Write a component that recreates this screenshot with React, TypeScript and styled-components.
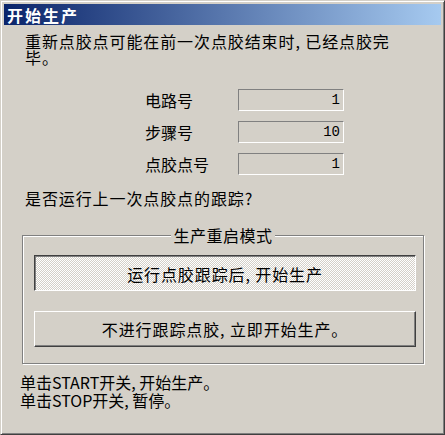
import React from "react";
import styled, { createGlobalStyle } from "styled-components";

const Global = createGlobalStyle`
  html, body { margin: 0; padding: 0; background: #d4d0c8; }
  body { font-family: "Noto Sans CJK SC", "Noto Sans", sans-serif; }
`;

const FONT = `"Noto Sans CJK SC", "Noto Sans", sans-serif`;

const Window = styled.div`
  box-sizing: border-box;
  width: 445px;
  height: 435px;
  background: #d4d0c8;
  border: 1px solid;
  border-color: #d4d0c8 #404040 #404040 #d4d0c8;
  box-shadow: inset 1px 1px 0 #ffffff, inset -1px -1px 0 #808080;
  padding: 3px;
  display: flex;
  flex-direction: column;
  font-family: ${FONT};
  color: #000;
`;

const TitleBar = styled.div`
  height: 21px;
  display: flex;
  align-items: center;
  padding-left: 3px;
  background: linear-gradient(to right, #0a246a, #a6caf0);
  color: #fff;
  font-weight: bold;
  font-size: 16px;
  letter-spacing: 2px;
`;

const Body = styled.div`
  display: flex;
  flex-direction: column;
  padding-left: 16px;
  font-size: 16px;
  letter-spacing: 0.9px;
`;

const Message = styled.div`
  margin: 8px 0 0 5px;
  line-height: 16px;
`;

const FieldGrid = styled.div`
  margin: 24px 0 0 125px;
  display: grid;
  grid-template-columns: 93px 106px;
  row-gap: 10px;
  align-items: center;
  letter-spacing: 0;
`;

const Label = styled.div`
  line-height: 16px;
`;

const ValueBox = styled.div`
  box-sizing: border-box;
  height: 22px;
  border: 1px solid;
  border-color: #808080 #ffffff #ffffff #808080;
  display: flex;
  align-items: center;
  justify-content: flex-end;
  padding-right: 3px;
  font-family: "Liberation Mono", "DejaVu Sans Mono", monospace;
  font-size: 14px;
`;

const Question = styled.div`
  margin: 15px 0 0 5px;
  line-height: 16px;
`;

const GroupBox = styled.div`
  position: relative;
  box-sizing: border-box;
  margin: 29px 0 0 2px;
  width: 402px;
  height: 129px;
  border: 1px solid #808080;
  box-shadow: inset 1px 1px 0 #ffffff, 1px 1px 0 #ffffff;
  padding: 19px 0 0 11px;
  display: flex;
  flex-direction: column;
  gap: 20px;
`;

const Legend = styled.div`
  position: absolute;
  top: -9px;
  left: 0;
  right: 0;
  display: flex;
  justify-content: center;
  line-height: 16px;
  letter-spacing: 0.5px;
`;

const LegendText = styled.span`
  background: #d4d0c8;
  padding: 0 2px;
`;

const Button = styled.div<{ $pressed?: boolean }>`
  box-sizing: border-box;
  width: 382px;
  height: 36px;
  display: flex;
  align-items: center;
  justify-content: center;
  font-size: 16px;
  border: 1px solid;
  border-color: ${(p) =>
    p.$pressed ? "#404040 #ffffff #ffffff #404040" : "#ffffff #404040 #404040 #ffffff"};
  box-shadow: ${(p) =>
    p.$pressed ? "inset 1px 1px 0 #808080" : "inset -1px -1px 0 #808080"};
  background: ${(p) =>
    p.$pressed
      ? "conic-gradient(#ffffff 25%, #d4d0c8 0 50%, #ffffff 0 75%, #d4d0c8 0) 0 0 / 2px 2px"
      : "#d4d0c8"};
  padding-top: ${(p) => (p.$pressed ? "1px" : "0")};
`;

const Footer = styled.div`
  margin-top: 9px;
  line-height: 18px;
  letter-spacing: 0;
`;

const fields = [
  { label: "电路号", value: "1" },
  { label: "步骤号", value: "10" },
  { label: "点胶点号", value: "1" },
];

export default function App() {
  return (
    <>
      <Global />
      <Window>
        <TitleBar>开始生产</TitleBar>
        <Body>
          <Message>
            重新点胶点可能在前一次点胶结束时, 已经点胶完
            <br />
            毕。
          </Message>
          <FieldGrid>
            {fields.map((f) => (
              <React.Fragment key={f.label}>
                <Label>{f.label}</Label>
                <ValueBox>{f.value}</ValueBox>
              </React.Fragment>
            ))}
          </FieldGrid>
          <Question>是否运行上一次点胶点的跟踪?</Question>
          <GroupBox>
            <Legend>
              <LegendText>生产重启模式</LegendText>
            </Legend>
            <Button $pressed>运行点胶跟踪后, 开始生产</Button>
            <Button>不进行跟踪点胶, 立即开始生产。</Button>
          </GroupBox>
          <Footer>
            单击START开关, 开始生产。
            <br />
            单击STOP开关, 暂停。
          </Footer>
        </Body>
      </Window>
    </>
  );
}
